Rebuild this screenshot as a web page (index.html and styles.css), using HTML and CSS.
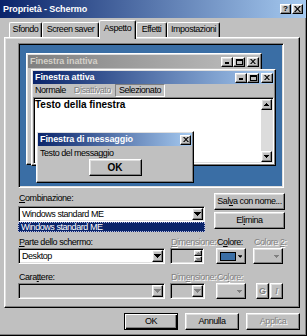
FILE: index.html
```html
<!DOCTYPE html>
<html lang="it">
<head>
    <meta charset="UTF-8">
    <title>Proprietà - Schermo</title>
    <link rel="stylesheet" href="styles.css">
</head>
<body>
    <div class="window">
        <div class="titlebar">
            <span class="title">Proprietà - Schermo</span>
            <div class="caption-btns">
                <span class="cap-btn raised help">?</span>
                <span class="cap-btn raised">
                    <svg width="7" height="6" viewBox="0 0 7 6"><path d="M0 0h1.5l2 2.2 2-2.2H7L4.3 3 7 6H5.5l-2-2.2-2 2.2H0l2.7-3z" fill="#000"/></svg>
                </span>
            </div>
        </div>

        <div class="tabs">
            <div class="tab tab-sfondo">Sfondo</div>
            <div class="tab tab-screen">Screen saver</div>
            <div class="tab tab-aspetto active">Aspetto</div>
            <div class="tab tab-effetti">Effetti</div>
            <div class="tab tab-impost">Impostazioni</div>
        </div>

        <div class="panel">
            <div class="preview sunken">
                <div class="mini raised inactive-win">
                    <div class="mini-title inactive">
                        <span>Finestra inattiva</span>
                        <div class="mini-btns">
                            <span class="mini-btn raised"><svg width="5" height="5" viewBox="0 0 5 5"><rect x="0" y="3" width="4" height="2" fill="#000"/></svg></span>
                            <span class="mini-btn raised"><svg width="7" height="6" viewBox="0 0 7 6"><path d="M0 0h7v6H0zM1 2v3h5V2z" fill="#000"/></svg></span>
                            <span class="mini-btn raised close"><svg width="6" height="5" viewBox="0 0 6 5"><path d="M0 0h1.4L3 1.7 4.6 0H6L3.7 2.5 6 5H4.6L3 3.3 1.4 5H0l2.3-2.5z" fill="#000"/></svg></span>
                        </div>
                    </div>
                </div>

                <div class="mini raised active-win">
                    <div class="mini-title">
                        <span>Finestra attiva</span>
                        <div class="mini-btns">
                            <span class="mini-btn raised"><svg width="5" height="5" viewBox="0 0 5 5"><rect x="0" y="3" width="4" height="2" fill="#000"/></svg></span>
                            <span class="mini-btn raised"><svg width="7" height="6" viewBox="0 0 7 6"><path d="M0 0h7v6H0zM1 2v3h5V2z" fill="#000"/></svg></span>
                            <span class="mini-btn raised close"><svg width="6" height="5" viewBox="0 0 6 5"><path d="M0 0h1.4L3 1.7 4.6 0H6L3.7 2.5 6 5H4.6L3 3.3 1.4 5H0l2.3-2.5z" fill="#000"/></svg></span>
                        </div>
                    </div>
                    <div class="menu">
                        <span class="menu-item">Normale</span>
                        <span class="menu-item disabled">Disattivato</span>
                        <span class="menu-item selected">Selezionato</span>
                    </div>
                    <div class="client sunken">
                        <span class="client-text">Testo della finestra</span>
                        <div class="scrollbar">
                            <span class="sb-btn raised"><svg width="5" height="3" viewBox="0 0 5 3"><path d="M2 0h1v1h1v1h1v1H0V2h1V1h1z" fill="#000"/></svg></span>
                            <span class="sb-btn raised"><svg width="5" height="3" viewBox="0 0 5 3"><path d="M0 0h5v1H4v1H3v1H2V2H1V1H0z" fill="#000"/></svg></span>
                        </div>
                    </div>
                </div>

                <div class="mini raised msg-win">
                    <div class="mini-title">
                        <span>Finestra di messaggio</span>
                        <span class="mini-btn raised close"><svg width="6" height="5" viewBox="0 0 6 5"><path d="M0 0h1.4L3 1.7 4.6 0H6L3.7 2.5 6 5H4.6L3 3.3 1.4 5H0l2.3-2.5z" fill="#000"/></svg></span>
                    </div>
                    <div class="msg-text">Testo del messaggio</div>
                    <div class="msg-row">
                        <span class="btn raised msg-ok">OK</span>
                    </div>
                </div>
            </div>

            <div class="scheme">
                <div class="scheme-main">
                    <div class="label"><u>C</u>ombinazione:</div>
                    <div class="combo sunken">
                        <span class="combo-text">Windows standard ME</span>
                        <span class="combo-arrow raised"><svg width="7" height="4" viewBox="0 0 7 4"><path d="M0 0h7v1H6v1H5v1H4v1H3V3H2V2H1V1H0z" fill="#000"/></svg></span>
                    </div>
                    <div class="scheme-list">Windows standard ME</div>
                </div>
                <div class="scheme-btns">
                    <span class="btn raised">Sal<u>v</u>a con nome...</span>
                    <span class="btn raised">El<u>i</u>mina</span>
                </div>
            </div>

            <div class="props item-props">
                <div class="label"><u>P</u>arte dello schermo:</div>
                <div class="label disabled"><u>D</u>imensione:</div>
                <div class="label">C<u>o</u>lore:</div>
                <div class="label disabled">Colore <u>2</u>:</div>

                <div class="combo sunken combo-wide">
                    <span class="combo-text">Desktop</span>
                    <span class="combo-arrow raised"><svg width="7" height="4" viewBox="0 0 7 4"><path d="M0 0h7v1H6v1H5v1H4v1H3V3H2V2H1V1H0z" fill="#000"/></svg></span>
                </div>
                <div class="spin sunken">
                    <div class="spin-btns">
                        <span class="spin-btn raised"><svg width="5" height="3" viewBox="0 0 5 3"><path d="M2 0h1v1h1v1h1v1H0V2h1V1h1z" fill="#808080"/></svg></span>
                        <span class="spin-btn raised"><svg width="5" height="3" viewBox="0 0 5 3"><path d="M0 0h5v1H4v1H3v1H2V2H1V1H0z" fill="#808080"/></svg></span>
                    </div>
                </div>
                <div class="color-btn raised">
                    <span class="swatch"></span>
                    <svg width="5" height="3" viewBox="0 0 5 3"><path d="M0 0h5v1H4v1H3v1H2V2H1V1H0z" fill="#000"/></svg>
                </div>
                <div class="color-btn raised empty">
                    <svg width="5" height="3" viewBox="0 0 5 3"><path d="M0 0h5v1H4v1H3v1H2V2H1V1H0z" fill="#808080"/></svg>
                </div>
            </div>

            <div class="props font-props">
                <div class="label">Cara<u>t</u>tere:</div>
                <div class="label disabled">Dim<u>e</u>nsione:</div>
                <div class="label disabled">Co<u>l</u>ore:</div>
                <div></div>

                <div class="combo sunken combo-wide off">
                    <span class="combo-text"></span>
                    <span class="combo-arrow raised"><svg width="7" height="4" viewBox="0 0 7 4"><path d="M0 0h7v1H6v1H5v1H4v1H3V3H2V2H1V1H0z" fill="#808080"/></svg></span>
                </div>
                <div class="combo sunken combo-small off">
                    <span class="combo-text"></span>
                    <span class="combo-arrow raised"><svg width="7" height="4" viewBox="0 0 7 4"><path d="M0 0h7v1H6v1H5v1H4v1H3V3H2V2H1V1H0z" fill="#808080"/></svg></span>
                </div>
                <div class="color-btn raised empty">
                    <svg width="5" height="3" viewBox="0 0 5 3"><path d="M0 0h5v1H4v1H3v1H2V2H1V1H0z" fill="#808080"/></svg>
                </div>
                <div class="style-btns">
                    <span class="style-btn raised bold">G</span>
                    <span class="style-btn raised italic">I</span>
                </div>
            </div>
        </div>

        <div class="footer">
            <span class="btn raised default">OK</span>
            <span class="btn raised">Annulla</span>
            <span class="btn raised disabled">Applica</span>
        </div>
    </div>
</body>
</html>
```

FILE: styles.css
```css
* {
    box-sizing: border-box;
}

body {
    margin: 0;
    background: #c0c0c0;
    font-family: 'Liberation Sans', Arial, sans-serif;
    font-size: 9px;
    line-height: 11px;
    letter-spacing: -0.45px;
    color: #000;
}

u {
    text-decoration-thickness: 1px;
    text-underline-offset: 1px;
}

/* 3d borders, win98 style */
.raised {
    background: #c0c0c0;
    border: 1px solid;
    border-color: #fff #000 #000 #fff;
    box-shadow: inset -1px -1px #808080, inset 1px 1px #dfdfdf;
}

.sunken {
    border: 1px solid;
    border-color: #808080 #fff #fff #808080;
    box-shadow: inset 1px 1px #000, inset -1px -1px #dfdfdf;
}

.disabled {
    color: #808080;
    text-shadow: 1px 1px #fff;
}

.window {
    width: 307px;
    height: 336px;
    background: #c0c0c0;
    border-right: 1px solid #000;
    border-bottom: 1px solid #000;
    box-shadow: inset -1px -1px #808080;
}

.titlebar {
    height: 18px;
    display: flex;
    align-items: center;
    padding: 0 3px 0 3px;
    background: linear-gradient(to right, #0a246a, #a6caf0);
}

.title {
    color: #fff;
    font-weight: bold;
    letter-spacing: -0.1px;
}

.caption-btns {
    margin-left: auto;
    display: flex;
    gap: 1px;
}

.cap-btn {
    width: 11px;
    height: 10px;
    display: flex;
    align-items: center;
    justify-content: center;
}

.help {
    font-weight: bold;
    font-size: 8px;
    line-height: 8px;
    letter-spacing: 0;
}

/* tabs */
.tabs {
    height: 19px;
    display: flex;
    align-items: flex-end;
    padding-left: 9px;
}

.tab {
    height: 15px;
    border: 1px solid;
    border-bottom: none;
    border-color: #fff #000 #000 #fff;
    border-radius: 2px 2px 0 0;
    box-shadow: inset -1px 0 #808080;
    text-align: center;
    line-height: 13px;
    white-space: nowrap;
}

.tab.active {
    height: 19px;
    margin-bottom: -2px;
    position: relative;
    z-index: 1;
    background: #c0c0c0;
    line-height: 14px;
}

.tab-sfondo { width: 33px; }
.tab-screen { width: 57px; }
.tab-aspetto { width: 37px; }
.tab-effetti { width: 31px; }
.tab-impost { width: 53px; }

.panel {
    margin-left: 4px;
    width: 296px;
    height: 271px;
    border: 1px solid;
    border-color: #fff #000 #000 #fff;
    box-shadow: inset -1px -1px #808080, inset 1px 1px #dfdfdf;
    padding: 5px 0 0 13px;
}

/* preview of the windows */
.preview {
    position: relative;
    width: 266px;
    height: 145px;
    background: #3a6ea5;
}

.mini {
    position: absolute;
    padding: 1px;
    display: flex;
    flex-direction: column;
}

.inactive-win {
    left: 7px;
    top: 9px;
    width: 236px;
    height: 112px;
}

.active-win {
    left: 12px;
    top: 25px;
    width: 245px;
    height: 97px;
}

.msg-win {
    left: 17px;
    top: 87px;
    width: 158px;
    height: 52px;
    z-index: 2;
}

.mini-title {
    height: 13px;
    display: flex;
    align-items: center;
    padding: 0 1px 0 2px;
    background: linear-gradient(to right, #0a246a, #a6caf0);
    color: #fff;
    font-weight: bold;
    letter-spacing: -0.1px;
    white-space: nowrap;
}

.mini-title.inactive {
    background: linear-gradient(to right, #808080, #c0c0c0);
    color: #d4d0c8;
}

.mini-btns {
    margin-left: auto;
    display: flex;
}

.mini-btn {
    width: 12px;
    height: 10px;
    display: flex;
    align-items: center;
    justify-content: center;
}

.mini-btn.close {
    margin-left: 2px;
}

.msg-win .mini-btn {
    margin-left: auto;
    width: 11px;
}

.menu {
    height: 13px;
    display: flex;
    align-items: center;
    margin-left: -2px;
    white-space: nowrap;
}

.menu-item {
    padding: 0 4px;
    line-height: 11px;
}

.menu-item.selected {
    border: 1px solid;
    border-color: #808080 #fff #fff #808080;
    padding: 0 3px;
}

.client {
    position: relative;
    flex: 1;
    background: #fff;
    padding: 1px;
}

.client-text {
    font-size: 10px;
    font-weight: bold;
    letter-spacing: 0;
    line-height: 12px;
}

.scrollbar {
    position: absolute;
    top: 1px;
    right: 1px;
    bottom: 1px;
    width: 11px;
    background: #dcdcdc;
    display: flex;
    flex-direction: column;
    justify-content: space-between;
}

.sb-btn {
    height: 11px;
    display: flex;
    align-items: center;
    justify-content: center;
}

.msg-text {
    margin-top: 2px;
    padding-left: 2px;
    line-height: 10px;
}

.msg-row {
    display: flex;
    justify-content: center;
    margin-top: 1px;
}

.msg-ok {
    width: 53px;
    height: 18px;
    font-size: 10px;
    font-weight: bold;
    letter-spacing: 0;
}

/* controls below the preview */
.btn {
    height: 17px;
    display: flex;
    align-items: center;
    justify-content: center;
    white-space: nowrap;
}

.label {
    height: 11px;
    padding-left: 1px;
    white-space: nowrap;
}

.scheme {
    display: flex;
    gap: 9px;
    margin-top: 5px;
}

.scheme-main {
    width: 187px;
}

.scheme-main .combo {
    margin-top: 2px;
}

.scheme-list {
    height: 10px;
    background: #0a246a;
    color: #fff;
    border: 1px dotted #b8bce0;
    line-height: 8px;
    padding-left: 2px;
}

.scheme-btns {
    width: 71px;
    display: flex;
    flex-direction: column;
    gap: 2px;
}

.combo {
    height: 16px;
    display: flex;
    align-items: center;
    background: #fff;
    padding: 1px;
}

.combo.off {
    background: #c0c0c0;
}

.combo-text {
    flex: 1;
    padding-left: 2px;
    line-height: 12px;
}

.combo-arrow {
    width: 11px;
    height: 12px;
    display: flex;
    align-items: center;
    justify-content: center;
}

.combo-wide { width: 147px; }
.combo-small { width: 35px; }

.props {
    display: grid;
    grid-template-columns: 152px 46px 37px 30px;
    grid-template-rows: 11px 16px;
}

.item-props {
    margin-top: 5px;
}

.font-props {
    margin-top: 8px;
}

.spin {
    width: 34px;
    height: 16px;
    background: #c0c0c0;
    padding: 1px;
    display: flex;
    justify-content: flex-end;
}

.spin-btns {
    width: 8px;
    display: flex;
    flex-direction: column;
}

.spin-btn {
    flex: 1;
    display: flex;
    align-items: center;
    justify-content: center;
}

.color-btn {
    width: 30px;
    height: 16px;
    display: flex;
    align-items: center;
    padding: 0 3px 0 3px;
    gap: 2px;
}

.color-btn.empty {
    justify-content: flex-end;
}

.swatch {
    width: 17px;
    height: 9px;
    background: #3a6ea5;
    border: 1px solid #000;
}

.style-btns {
    display: flex;
    gap: 1px;
    margin-left: 3px;
}

.style-btn {
    width: 13px;
    height: 16px;
    display: flex;
    align-items: center;
    justify-content: center;
    color: #808080;
    text-shadow: 1px 1px #fff;
    letter-spacing: 0;
}

.style-btn.bold {
    font-weight: bold;
}

.style-btn.italic {
    font-style: italic;
    font-family: 'Liberation Serif', serif;
}

.footer {
    display: flex;
    justify-content: flex-end;
    gap: 7px;
    padding-right: 6px;
    margin-top: 5px;
}

.footer .btn {
    width: 54px;
}

.btn.default {
    border-color: #000;
    box-shadow: inset 1px 1px #fff, inset -1px -1px #000, inset -2px -2px #808080;
}
```
